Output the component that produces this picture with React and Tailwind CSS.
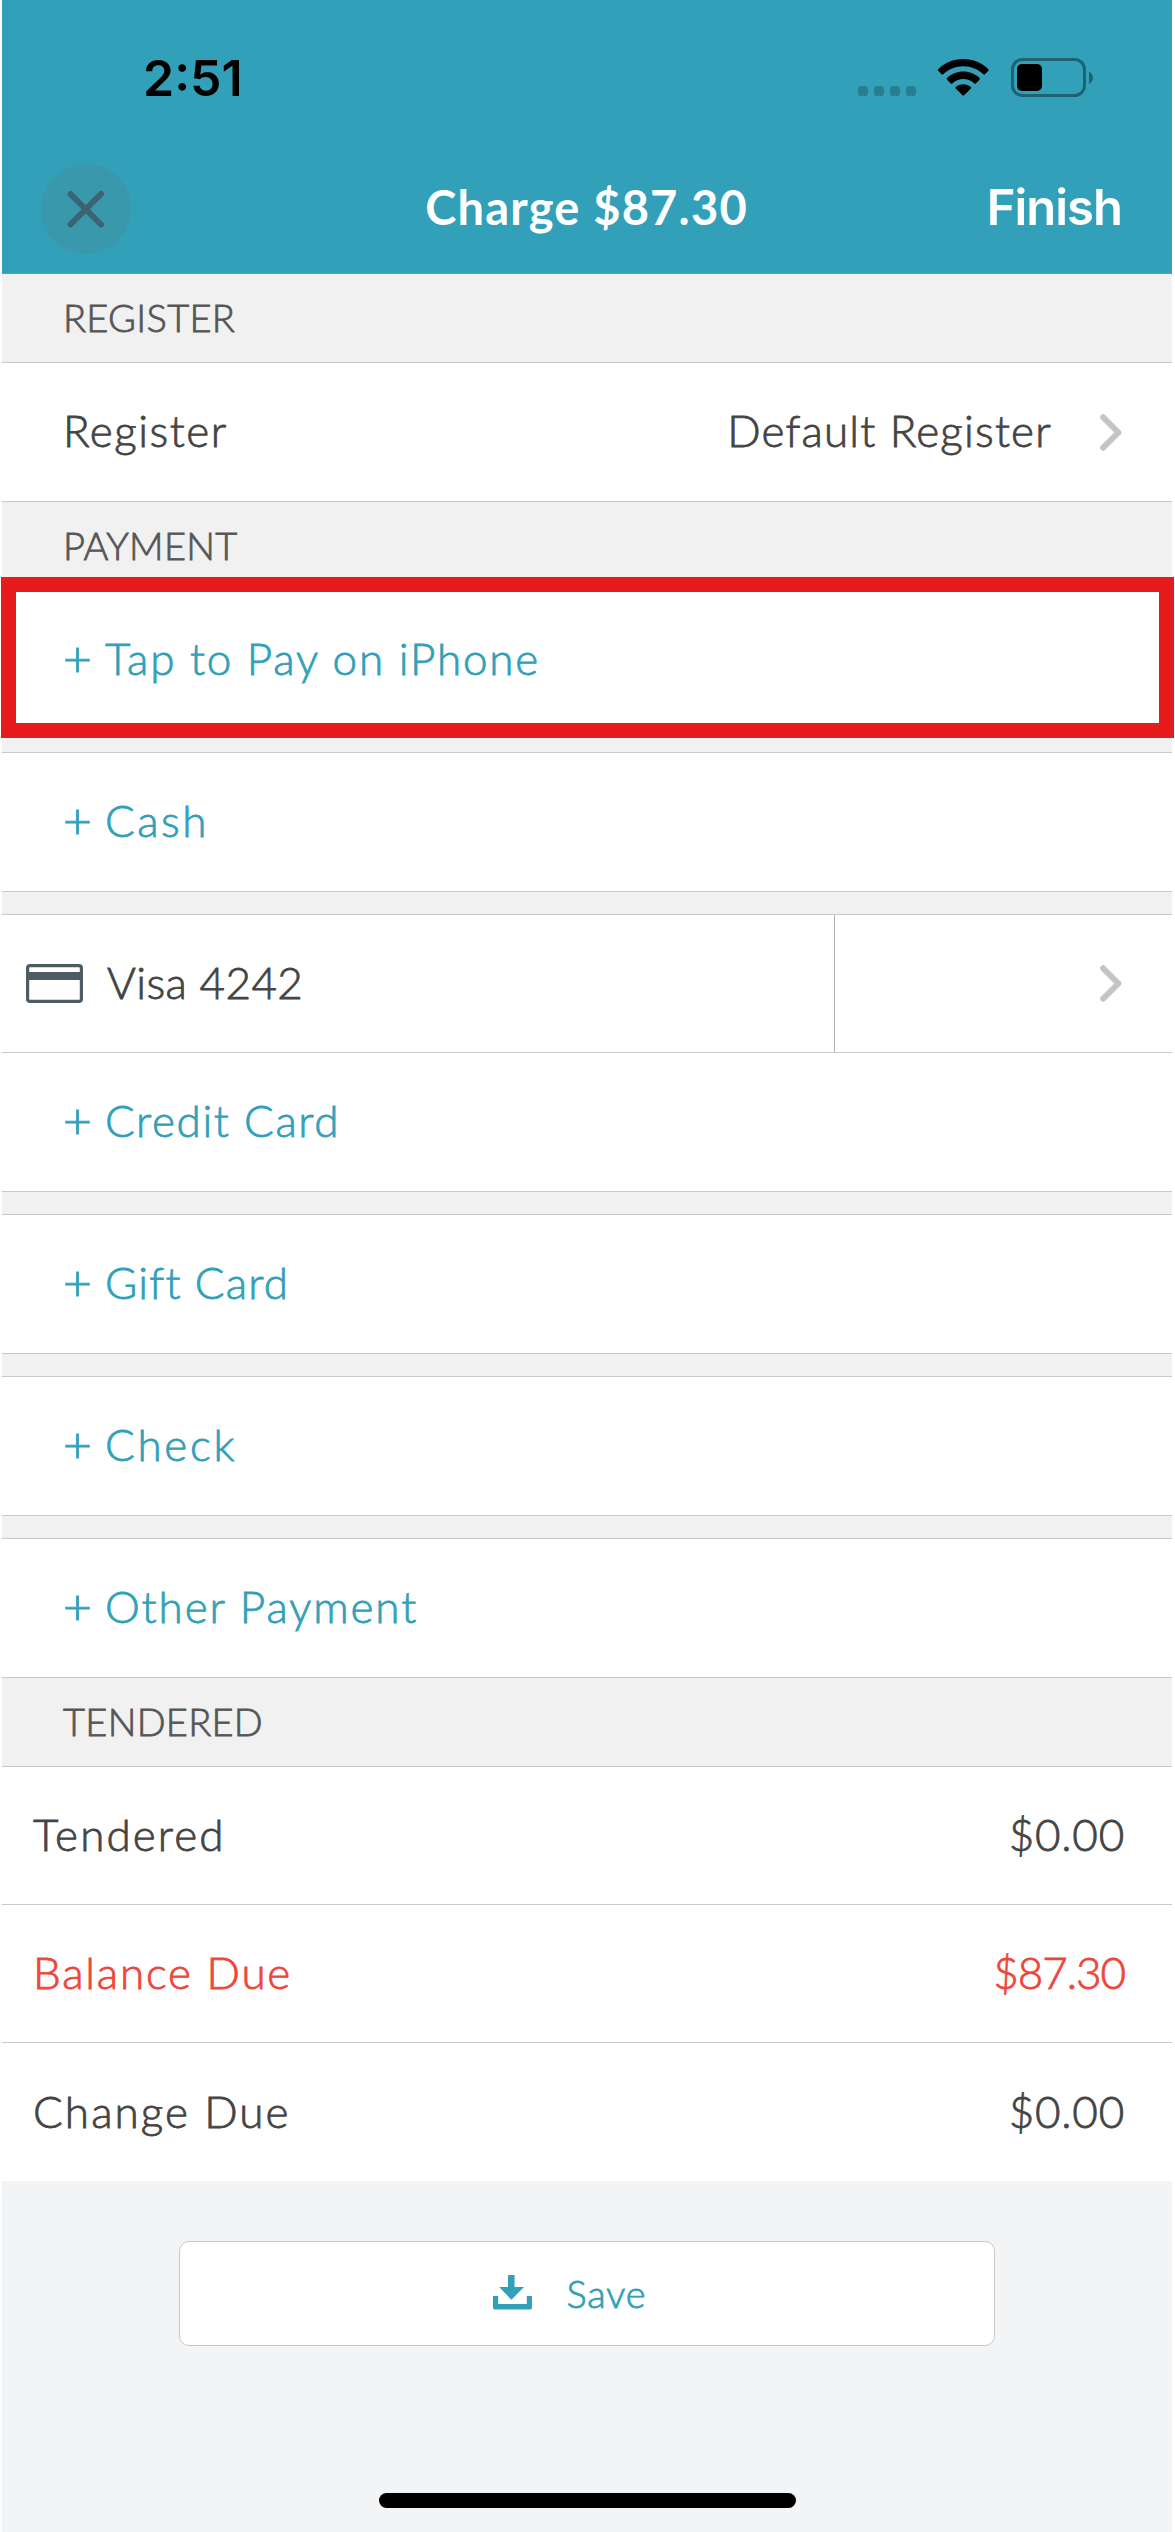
import React from 'react';

const CloseIcon = () => (
  <svg className="w-[38px] h-[38px]" viewBox="0 0 38 38" fill="none" stroke="#3c6371" strokeWidth="6" strokeLinecap="round">
    <path d="M3.5 4 L34 34.5 M34 4 L3.5 34.5" />
  </svg>
);

const WifiIcon = () => (
  <svg className="w-[51px] h-[37px]" viewBox="0 0 51 37" fill="#000">
    <path d="M25.3 0 C35.3 0 44.3 4 50.4 10.2 Q51.1 11 50.4 11.8 L47 15.2 Q46.2 15.9 45.4 15.2 C40.2 10.2 33.2 7.2 25.3 7.2 C17.4 7.2 10.4 10.2 5.2 15.2 Q4.4 15.9 3.6 15.2 L.2 11.8 Q-.5 11 .2 10.2 C6.3 4 15.3 0 25.3 0 Z" />
    <path d="M25.3 12.6 C31.6 12.6 37.3 15 41.6 19.1 Q42.3 19.9 41.5 20.7 L37.8 24.4 Q37.1 25.1 36.3 24.4 C33.4 21.8 29.6 20 25.3 20 C21 20 17.2 21.8 14.3 24.4 Q13.5 25.1 12.8 24.4 L9.1 20.7 Q8.3 19.9 9 19.1 C13.3 15 19 12.6 25.3 12.6 Z" />
    <path d="M25.3 25.3 C28.2 25.3 30.8 26.3 32.8 27.9 Q33.6 28.7 32.9 29.5 L26.1 36.3 Q25.3 37.1 24.5 36.3 L17.7 29.5 Q17 28.7 17.8 27.9 C19.8 26.3 22.4 25.3 25.3 25.3 Z" />
  </svg>
);

const BatteryIcon = () => (
  <svg className="w-[82px] h-[39px]" viewBox="0 0 82 39">
    <rect x="1.5" y="1.5" width="72" height="36" rx="10" fill="none" stroke="#1f6270" strokeWidth="3" />
    <rect x="6" y="6" width="25" height="27" rx="5" fill="#000" />
    <path d="M78 13.5 C83.3 16 83.3 23.5 78 26 Z" fill="#1f6270" />
  </svg>
);

const Chevron = () => (
  <svg className="w-[22px] h-[37px]" viewBox="0 0 22 37" fill="none" stroke="#c4c4c6" strokeWidth="6" strokeLinecap="round" strokeLinejoin="round">
    <path d="M3.2 3.3 L18.4 18.5 L3.2 33.7" />
  </svg>
);

const CardIcon = () => (
  <svg className="w-[57px] h-[39px]" viewBox="0 0 57 39">
    <rect x="1.6" y="1.6" width="53.8" height="35.8" rx="2.5" fill="#fff" stroke="#4d5b63" strokeWidth="3.2" />
    <rect x="1" y="8" width="55" height="8" fill="#4d5b63" />
  </svg>
);

const SaveIcon = () => (
  <svg className="w-[39px] h-[35px]" viewBox="0 0 39 35" fill="#31a0b8">
    <path d="M15 0 H21.6 V12 H31 L18.4 24.7 L6.2 12 H15 Z" />
    <path d="M0 21 H5.2 V29 H33.8 V21 H39 V32.5 Q39 34.5 37 34.5 H2 Q0 34.5 0 32.5 Z" />
  </svg>
);

const SectionHeader = ({ children }) => (
  <div className="flex items-center h-[89px] pl-[61px] pb-[3px] bg-[#f1f1f1] border-b border-[#c9c9c9] text-[38px] tracking-[0.3px] text-[#565656]">
    {children}
  </div>
);

const AddRow = ({ label, tracking }) => (
  <div className="flex items-center h-[139px] pl-[61px] pb-[5px] bg-white border-b border-[#c9c9c9] text-[#31a0b8]">
    <span className="w-[42px] text-[50px]">+</span>
    <span className={tracking}>{label}</span>
  </div>
);

const Gap = () => <div className="h-[23px] bg-[#f1f1f1] border-b border-[#c9c9c9]" />;

const totals = [
  { label: 'Tendered', amount: '$0.00', style: 'border-b text-[#444]', tracking: 'tracking-[2.1px]', amountTracking: 'tracking-[0.8px]' },
  { label: 'Balance Due', amount: '$87.30', style: 'border-b text-[#ee4639]', tracking: 'tracking-[1.8px]', amountTracking: 'tracking-[-1px]' },
  { label: 'Change Due', amount: '$0.00', style: 'text-[#444]', tracking: 'tracking-[2.1px]', amountTracking: 'tracking-[0.8px]' },
];

const App = () => {
  return (
    <div className="w-[1175px] h-[2532px] pl-[2px] pr-[3px] bg-white overflow-hidden">
      <div className="flex flex-col h-full bg-[#f3f4f6] font-['Lato',sans-serif] font-light text-[44px] leading-none text-[#444] [-webkit-text-stroke:0.8px]">
        <header className="h-[274px] bg-[#31a0b8] border-b border-[#7d9298] [-webkit-text-stroke:0]">
          {/* Status bar */}
          <div className="flex items-center justify-between h-[155px] pl-[141px] pr-[79px] text-black">
            <span className="font-['Inter',sans-serif] font-semibold text-[50px]">2:51</span>
            <div className="flex items-center">
              <div className="flex gap-[6px] mt-[27px] mr-[22px]">
                {[0, 1, 2, 3].map((i) => (
                  <span key={i} className="w-[10px] h-[10px] rounded-[3px] bg-[#287f92]" />
                ))}
              </div>
              <WifiIcon />
              <div className="w-[22px]" />
              <BatteryIcon />
            </div>
          </div>
          {/* Nav bar */}
          <div className="grid grid-cols-3 items-center h-[108px] pl-[39px] pr-[50px] text-white">
            <div className="flex items-center justify-center w-[90px] h-[90px] rounded-full bg-[#3a98ad]">
              <CloseIcon />
            </div>
            <h1 className="justify-self-center pl-[10px] pb-[3px] font-bold text-[47px] tracking-[1.2px] whitespace-nowrap">Charge $87.30</h1>
            <button className="justify-self-end pb-[3px] font-['Inter',sans-serif] font-semibold text-[49px] tracking-[-1px]">Finish</button>
          </div>
        </header>

        <SectionHeader>REGISTER</SectionHeader>
        <div className="flex items-center h-[139px] pl-[61px] pr-[50px] bg-white border-b border-[#c9c9c9]">
          <span className="flex-1 pb-[5px] tracking-[1.5px]">Register</span>
          <span className="pb-[5px] mr-[48px] tracking-[1.2px]">Default Register</span>
          <Chevron />
        </div>

        <SectionHeader>PAYMENT</SectionHeader>
        <div className="relative">
          <AddRow label="Tap to Pay on iPhone" tracking="tracking-[1.8px]" />
          {/* Highlight frame around the row */}
          <div className="absolute -left-px -top-[14px] -right-[2px] h-[161px] border-[15px] border-[#e71b1b]" />
        </div>
        <Gap />
        <AddRow label="Cash" tracking="tracking-[2.5px]" />
        <Gap />
        <div className="flex h-[138px] bg-white border-b border-[#c9c9c9]">
          <div className="flex items-center w-[833px] pl-[24px] border-r border-[#b0b0b0]">
            <CardIcon />
            <span className="ml-[24px] pb-[4px] tracking-[0.4px]">Visa 4242</span>
          </div>
          <div className="flex flex-1 items-center justify-end pr-[50px]">
            <Chevron />
          </div>
        </div>
        <AddRow label="Credit Card" tracking="tracking-[1.6px]" />
        <Gap />
        <AddRow label="Gift Card" tracking="tracking-[1.2px]" />
        <Gap />
        <AddRow label="Check" tracking="tracking-[2.7px]" />
        <Gap />
        <AddRow label="Other Payment" tracking="tracking-[1.9px]" />

        <SectionHeader>TENDERED</SectionHeader>
        {totals.map((row) => (
          <div key={row.label} className={`flex items-center justify-between h-[138px] pl-[31px] pr-[47px] pb-[3px] bg-white border-[#c9c9c9] ${row.style}`}>
            <span className={row.tracking}>{row.label}</span>
            <span className={row.amountTracking}>{row.amount}</span>
          </div>
        ))}

        <div className="flex flex-1 flex-col items-center justify-between pt-[60px] pb-[24px]">
          <button className="flex items-center justify-center w-[816px] h-[105px] pr-[34px] pb-[2px] bg-white border border-[#c9c9c9] rounded-[10px] text-[#31a0b8] text-[38px]">
            <SaveIcon />
            <span className="ml-[34px] tracking-[0.9px]">Save</span>
          </button>
          <div className="w-[417px] h-[15px] bg-black rounded-full" />
        </div>
      </div>
    </div>
  );
};

export default App;
